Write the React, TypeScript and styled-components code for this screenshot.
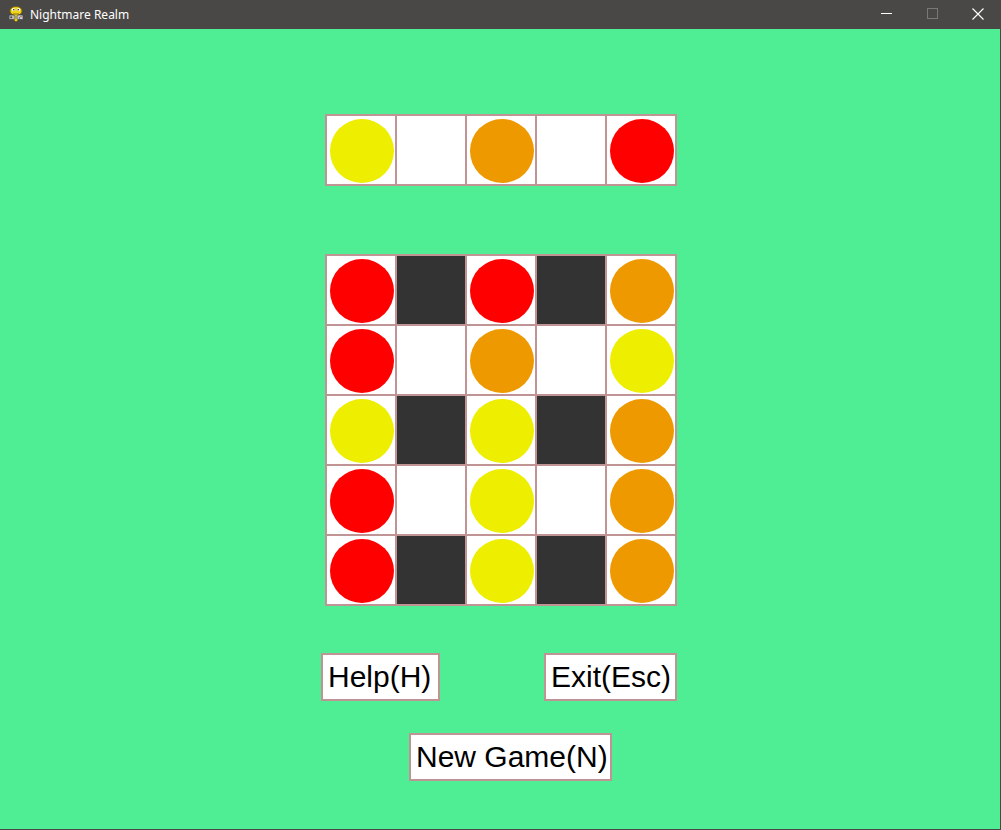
import React from 'react';
import styled, { createGlobalStyle } from 'styled-components';

type Piece = 'red' | 'yellow' | 'orange' | 'empty' | 'block';

const COLORS: Record<string, string> = {
  red: '#ff0000',
  yellow: '#eeee00',
  orange: '#ee9900',
};

const targetRow: Piece[] = ['yellow', 'empty', 'orange', 'empty', 'red'];

const board: Piece[][] = [
  ['red', 'block', 'red', 'block', 'orange'],
  ['red', 'empty', 'orange', 'empty', 'yellow'],
  ['yellow', 'block', 'yellow', 'block', 'orange'],
  ['red', 'empty', 'yellow', 'empty', 'orange'],
  ['red', 'block', 'yellow', 'block', 'orange'],
];

const GlobalStyle = createGlobalStyle`
  html, body {
    margin: 0;
    padding: 0;
    background: #50ee94;
  }
  * {
    box-sizing: border-box;
  }
`;

const PygameIcon: React.FC = () => (
  <svg width="16" height="18" viewBox="0 0 16 18">
    <ellipse cx="8" cy="5" rx="6" ry="4.5" fill="#f2d41a" stroke="#6b5a10" strokeWidth="0.8" />
    <circle cx="5.5" cy="3.5" r="1.6" fill="#fff" />
    <circle cx="10.5" cy="3.5" r="1.6" fill="#fff" />
    <circle cx="5.8" cy="3.7" r="0.8" fill="#222" />
    <circle cx="10.2" cy="3.7" r="0.8" fill="#222" />
    <path d="M5 8 C4 11 5 14 8 16 C11 14 12 11 11 8 Z" fill="#f2d41a" stroke="#6b5a10" strokeWidth="0.8" />
    <rect x="1" y="9" width="6" height="4.5" rx="1" fill="#bbbbbb" stroke="#444" strokeWidth="0.7" />
    <circle cx="3.2" cy="11.2" r="1" fill="#444" />
    <rect x="9" y="9" width="6" height="4.5" rx="1" fill="#cccccc" stroke="#444" strokeWidth="0.7" />
    <circle cx="13" cy="10.6" r="0.7" fill="#c03030" />
    <circle cx="11.4" cy="12" r="0.7" fill="#3050c0" />
  </svg>
);

const App: React.FC = () => {
  return (
    <>
      <GlobalStyle />
      <Window>
        <TitleBar>
          <TitleLeft>
            <PygameIcon />
            <TitleText>Nightmare Realm</TitleText>
          </TitleLeft>
          <Controls>
            <ControlButton>
              <svg width="11" height="11" viewBox="0 0 11 11">
                <line x1="0" y1="5.5" x2="11" y2="5.5" stroke="#ffffff" strokeWidth="1" />
              </svg>
            </ControlButton>
            <ControlButton>
              <svg width="11" height="11" viewBox="0 0 11 11">
                <rect x="0.5" y="0.5" width="10" height="10" fill="none" stroke="#7a7876" strokeWidth="1" />
              </svg>
            </ControlButton>
            <ControlButton>
              <svg width="12" height="12" viewBox="0 0 12 12">
                <path d="M0.5 0.5 L11.5 11.5 M11.5 0.5 L0.5 11.5" stroke="#ffffff" strokeWidth="1.1" />
              </svg>
            </ControlButton>
          </Controls>
        </TitleBar>

        <Stage>
          <Grid>
            {targetRow.map((p, i) => (
              <Cell key={i} $dark={p === 'block'}>
                {p !== 'empty' && p !== 'block' && <Ball $color={COLORS[p]} />}
              </Cell>
            ))}
          </Grid>

          <MainGrid>
            {board.flat().map((p, i) => (
              <Cell key={i} $dark={p === 'block'}>
                {p !== 'empty' && p !== 'block' && <Ball $color={COLORS[p]} />}
              </Cell>
            ))}
          </MainGrid>

          <ButtonRow>
            <TextButton $width={119} $shift={-4}>Help(H)</TextButton>
            <TextButton $width={133}>Exit(Esc)</TextButton>
          </ButtonRow>
          <NewGameRow>
            <TextButton $width={203}>New Game(N)</TextButton>
          </NewGameRow>
        </Stage>
      </Window>
    </>
  );
};

const Window = styled.div`
  width: 1001px;
  height: 830px;
  display: flex;
  flex-direction: column;
  background: #50ee94;
  border-right: 1px solid #4a4846;
  border-bottom: 1px solid #4a4846;
  overflow: hidden;
`;

const TitleBar = styled.div`
  height: 29px;
  flex-shrink: 0;
  background: #4a4846;
  display: flex;
  align-items: center;
  justify-content: space-between;
  margin-right: -1px;
`;

const TitleLeft = styled.div`
  display: flex;
  align-items: center;
  gap: 6px;
  padding-left: 8px;
`;

const TitleText = styled.span`
  font-family: 'Segoe UI', 'Noto Sans', 'Open Sans', sans-serif;
  font-size: 12px;
  color: #ffffff;
`;

const Controls = styled.div`
  display: flex;
  height: 100%;
`;

const ControlButton = styled.div`
  width: 46px;
  height: 100%;
  display: flex;
  align-items: center;
  justify-content: center;
  padding-bottom: 2px;
`;

const Stage = styled.div`
  display: flex;
  flex-direction: column;
  align-items: flex-start;
  padding-left: 325px;
  padding-top: 85px;
`;

const Grid = styled.div`
  display: grid;
  grid-template-columns: repeat(5, 68px);
  grid-auto-rows: 68px;
  gap: 2px;
  padding: 2px;
  background: #c09494;
`;

const MainGrid = styled(Grid)`
  margin-top: 68px;
`;

const Cell = styled.div<{ $dark: boolean }>`
  background: ${(p) => (p.$dark ? '#333333' : '#ffffff')};
  padding: 3px 1px 1px 3px;
  display: flex;
`;

const Ball = styled.div<{ $color: string }>`
  width: 64px;
  height: 64px;
  border-radius: 50%;
  background: ${(p) => p.$color};
`;

const ButtonRow = styled.div`
  width: 352px;
  margin-top: 47px;
  display: flex;
  justify-content: space-between;
`;

const TextButton = styled.div<{ $width: number; $shift?: number }>`
  width: ${(p) => p.$width}px;
  height: 48px;
  margin-left: ${(p) => p.$shift ?? 0}px;
  padding: 0 0 0 5px;
  border: 2px solid #c09494;
  background: #ffffff;
  display: flex;
  align-items: center;
  font-family: 'Liberation Sans', Arial, sans-serif;
  font-size: 30px;
  color: #000000;
  white-space: nowrap;
  overflow: hidden;
`;

const NewGameRow = styled.div`
  margin-top: 32px;
  padding-left: 84px;
  display: flex;
`;

export default App;
